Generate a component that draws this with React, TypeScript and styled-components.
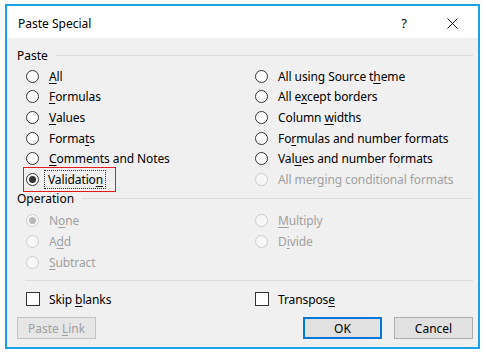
import React from 'react';
import styled, { createGlobalStyle } from 'styled-components';

const GlobalStyle = createGlobalStyle`
  html, body {
    margin: 0;
    padding: 0;
    background: #ffffff;
  }
  body {
    font-family: "Noto Sans", "Open Sans", sans-serif;
    font-size: 12px;
    color: #000;
  }
`;

type Opt = {
  label: string;
  u: number;
  checked?: boolean;
  disabled?: boolean;
  marked?: boolean;
  focused?: boolean;
};

const pasteLeft: Opt[] = [
  { label: 'All', u: 0 },
  { label: 'Formulas', u: 0 },
  { label: 'Values', u: 0 },
  { label: 'Formats', u: 5 },
  { label: 'Comments and Notes', u: 0 },
  { label: 'Validation', u: 9, checked: true, marked: true, focused: true },
];

const pasteRight: Opt[] = [
  { label: 'All using Source theme', u: 18 },
  { label: 'All except borders', u: 5 },
  { label: 'Column widths', u: 7 },
  { label: 'Formulas and number formats', u: 2 },
  { label: 'Values and number formats', u: 3 },
  { label: 'All merging conditional formats', u: 7, disabled: true },
];

const opLeft: Opt[] = [
  { label: 'None', u: 1, checked: true, disabled: true },
  { label: 'Add', u: 1, disabled: true },
  { label: 'Subtract', u: 0, disabled: true },
];

const opRight: Opt[] = [
  { label: 'Multiply', u: 0, disabled: true },
  { label: 'Divide', u: 1, disabled: true },
];

const Accel = ({ text, u }: { text: string; u: number }) => (
  <>
    {text.slice(0, u)}
    <u>{text.charAt(u)}</u>
    {text.slice(u + 1)}
  </>
);

const RadioRow = ({ opt }: { opt: Opt }) => (
  <Row $marked={opt.marked}>
    <RadioDot $checked={opt.checked} $disabled={opt.disabled} />
    <Label $disabled={opt.disabled} $focused={opt.focused}>
      <Accel text={opt.label} u={opt.u} />
    </Label>
  </Row>
);

export default function App() {
  return (
    <>
      <GlobalStyle />
      <Dialog>
        <TitleBar>
          <Title>Paste Special</Title>
          <TitleButtons>
            <Help>?</Help>
            <CloseIcon viewBox="0 0 12 12">
              <path d="M0.5 0.5 L11.5 11.5 M11.5 0.5 L0.5 11.5" stroke="#000" strokeWidth="1" />
            </CloseIcon>
          </TitleButtons>
        </TitleBar>

        <Body>
          <Legend>Paste</Legend>
          <Columns>
            <Column>
              {pasteLeft.map((o) => (
                <RadioRow key={o.label} opt={o} />
              ))}
            </Column>
            <Column>
              {pasteRight.map((o) => (
                <RadioRow key={o.label} opt={o} />
              ))}
            </Column>
          </Columns>

          <Legend $disabled>Operation</Legend>
          <Columns $op>
            <Column>
              {opLeft.map((o) => (
                <RadioRow key={o.label} opt={o} />
              ))}
            </Column>
            <Column>
              {opRight.map((o) => (
                <RadioRow key={o.label} opt={o} />
              ))}
            </Column>
          </Columns>

          <Separator />

          <Columns>
            <CheckRow>
              <CheckBox />
              <Label>
                <Accel text="Skip blanks" u={5} />
              </Label>
            </CheckRow>
            <CheckRow>
              <CheckBox />
              <Label>
                <Accel text="Transpose" u={8} />
              </Label>
            </CheckRow>
          </Columns>

          <ButtonBar>
            <Button disabled>
              <Accel text="Paste Link" u={6} />
            </Button>
            <Actions>
              <Button $default>OK</Button>
              <Button>Cancel</Button>
            </Actions>
          </ButtonBar>
        </Body>
      </Dialog>
    </>
  );
}

const Dialog = styled.div`
  box-sizing: border-box;
  margin: 4px 0 0 5px;
  width: 475px;
  height: 345px;
  border: 2px solid #19a3e6;
  background: #f0f0f0;
  display: flex;
  flex-direction: column;
`;

const TitleBar = styled.div`
  height: 32px;
  background: #ffffff;
  display: flex;
  align-items: center;
  justify-content: space-between;
  padding: 2px 0 0 11px;
  box-sizing: border-box;
`;

const Title = styled.div`
  font-size: 12px;
  color: #000;
`;

const TitleButtons = styled.div`
  display: flex;
  align-items: center;
`;

const Help = styled.span`
  font-size: 13px;
  width: 10px;
  margin-right: 38px;
  text-align: center;
`;

const CloseIcon = styled.svg`
  width: 11px;
  height: 11px;
  margin-right: 20px;
`;

const Body = styled.div`
  flex: 1;
  padding: 10px 5px 0 10px;
  display: flex;
  flex-direction: column;
`;

const Legend = styled.div<{ $disabled?: boolean }>`
  display: flex;
  align-items: center;
  height: 16px;
  line-height: 16px;
  color: #000;
  margin-bottom: ${(p) => (p.$disabled ? '4px' : '2px')};

  &::after {
    content: '';
    flex: 1;
    height: 1px;
    background: #dcdcdc;
    margin-left: 8px;
    margin-top: -1px;
  }
`;

const Columns = styled.div<{ $op?: boolean }>`
  display: grid;
  grid-template-columns: 229px 1fr;
  padding-left: 9px;
  margin-bottom: ${(p) => (p.$op ? '0' : '1px')};
`;

const Column = styled.div`
  display: flex;
  flex-direction: column;
`;

const Row = styled.div<{ $marked?: boolean }>`
  position: relative;
  height: 20.6px;
  display: flex;
  align-items: center;

  ${(p) =>
    p.$marked &&
    `
    &::before {
      content: '';
      position: absolute;
      left: -3px;
      top: -2px;
      width: 93px;
      height: 25px;
      box-sizing: border-box;
      border: 1px solid #e01b1b;
      pointer-events: none;
    }
  `}
`;

const RadioDot = styled.span<{ $checked?: boolean; $disabled?: boolean }>`
  box-sizing: border-box;
  flex: none;
  width: 13px;
  height: 13px;
  border-radius: 50%;
  border: 1px solid ${(p) => (p.$disabled ? '#cccccc' : '#333333')};
  background: ${(p) => (p.$disabled ? '#f7f7f7' : '#ffffff')};
  margin-right: 10px;
  display: flex;
  align-items: center;
  justify-content: center;

  &::after {
    content: '';
    display: ${(p) => (p.$checked ? 'block' : 'none')};
    width: 7px;
    height: 7px;
    border-radius: 50%;
    background: ${(p) => (p.$disabled ? '#b8b8b8' : '#333333')};
  }
`;

const Label = styled.span<{ $disabled?: boolean; $focused?: boolean }>`
  color: ${(p) => (p.$disabled ? '#a0a0a0' : '#000')};
  white-space: nowrap;
  line-height: 15px;
  letter-spacing: -0.1px;
  padding: ${(p) => (p.$focused ? '0 1px 0 2px' : '0')};
  margin-left: ${(p) => (p.$focused ? '-3px' : '0')};
  outline: ${(p) => (p.$focused ? '1px dotted #333' : 'none')};
  outline-offset: 1px;

  u {
    text-decoration-thickness: 1px;
    text-underline-offset: 2px;
  }
`;

const Separator = styled.div`
  height: 1px;
  background: #dcdcdc;
  margin: 8px 0 9px 8px;
`;

const CheckRow = styled.div`
  display: flex;
  align-items: center;
  height: 18px;
`;

const CheckBox = styled.span`
  box-sizing: border-box;
  flex: none;
  width: 14px;
  height: 14px;
  border: 1px solid #333333;
  background: #ffffff;
  margin-right: 9px;
`;

const ButtonBar = styled.div`
  display: flex;
  justify-content: space-between;
  margin-top: 8px;
`;

const Actions = styled.div`
  display: flex;
  gap: 12px;
`;

const Button = styled.button<{ $default?: boolean }>`
  box-sizing: border-box;
  width: 79px;
  height: 22px;
  padding: 0;
  font-family: inherit;
  font-size: 12px;
  color: #000;
  background: #e1e1e1;
  border: 1px solid #adadad;
  ${(p) => p.$default && 'border: 2px solid #0078d7;'}

  &:disabled {
    color: #a0a0a0;
    background: #e6e6e6;
    border-color: #c4c4c4;
  }

  u {
    text-underline-offset: 2px;
  }
`;
